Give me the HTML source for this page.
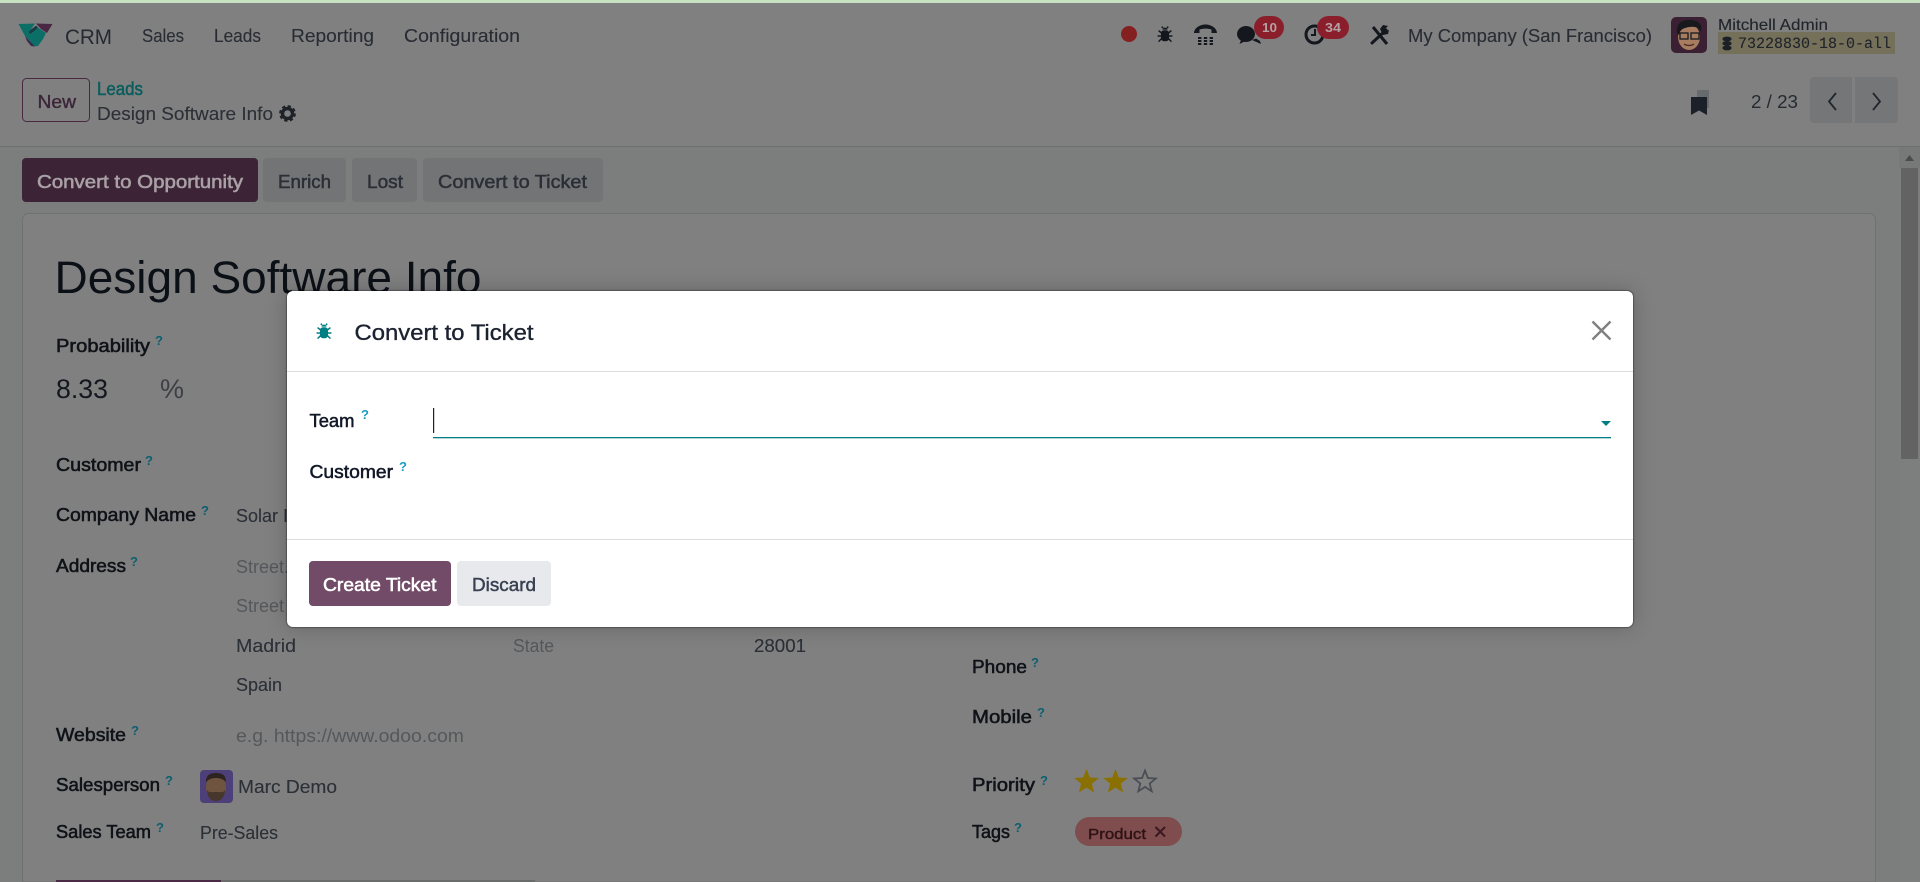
<!DOCTYPE html>
<html lang="en">
<head>
<meta charset="utf-8">
<title>Convert to Ticket</title>
<style>
html,body{margin:0;padding:0;width:1920px;height:882px;overflow:hidden;background:#808080}
#root{position:relative;width:1920px;height:882px;overflow:hidden;background:#808080}
svg{position:absolute;left:0;top:0;display:block}
text{font-family:"Liberation Sans",sans-serif;white-space:pre}
.nav{font-size:18px;fill:#282c33;stroke:#282c33;stroke-width:.12px}
.lb{font-size:18px;fill:#0f1318;stroke:#0f1318;stroke-width:.55px}
.v{font-size:18px;fill:#2b2f36;stroke:#2b2f36;stroke-width:.12px}
.ph{font-size:18px;fill:#55585b}
.q{font-size:13px;fill:#0b5f70;font-weight:700}
.b{font-size:18px;fill:#2b2f36;stroke:#2b2f36;stroke-width:.5px}
#modal{position:absolute;left:287px;top:291px;width:1346px;height:336px;background:#fff;border-radius:6px;box-shadow:0 0 1px 1px rgba(0,0,0,.3),0 0 22px rgba(0,0,0,.22)}
</style>
</head>
<body>
<div id="root">
<svg width="1920" height="882" viewBox="0 0 1920 882" xmlns="http://www.w3.org/2000/svg">
  <defs>
    <g id="bug">
      <path d="M5.400 3.600a2.700 2.700 0 0 1 5.200 0z"/>
      <rect x="4" y="4.300" width="8" height="11" rx="3"/>
      <path d="M4.500 7 1.600 4.600M11.500 7l2.900-2.400M4.500 10H.6M11.500 10h3.900M4.500 12.600 1.600 15.600M11.500 12.600l2.900 3M6 2 4.800.6M10 2l1.200-1.400" fill="none" stroke-width="1.500" stroke="currentColor"/>
    </g>
    <polygon id="star" points="0,-13 3.29,-4.53 12.36,-4.02 5.33,1.73 7.64,10.52 0,5.6 -7.64,10.52 -5.33,1.73 -12.36,-4.02 -3.29,-4.53"/>
  </defs>

  <!-- background -->
  <rect width="1920" height="882" fill="#808080"/>
  <rect width="1920" height="3" fill="#c6e2c1"/>
  <rect y="147" width="1920" height="735" fill="#7c7e7e"/>
  <rect y="146" width="1920" height="1" fill="#6e7070"/>

  <!-- logo -->
  <polygon points="18.500,24 35,23.500 31,29 37,27 46,33 43,39 38,46 33,46.500 30,41 25,36" fill="#0b6f68"/>
  <polygon points="36,23.500 52.500,24 47,33 41,29" fill="#4a2745"/>
  <polygon points="25,36 35,46.500 31,46 27,41" fill="#3c2a4a"/>
  <path d="M30.500 32 36 27.500" stroke="#1c3a44" stroke-width="3" stroke-linecap="round" fill="none"/>

  <!-- nav -->
  <text x="65" y="44" font-size="21" fill="#252a32" textLength="47" lengthAdjust="spacingAndGlyphs">CRM</text>
  <text class="nav" x="142" y="42" textLength="42" lengthAdjust="spacingAndGlyphs">Sales</text>
  <text class="nav" x="214" y="42" textLength="47" lengthAdjust="spacingAndGlyphs">Leads</text>
  <text class="nav" x="291" y="42" textLength="83" lengthAdjust="spacingAndGlyphs">Reporting</text>
  <text class="nav" x="404" y="42" textLength="116" lengthAdjust="spacingAndGlyphs">Configuration</text>

  <!-- systray -->
  <circle cx="1129" cy="34" r="8" fill="#842020"/>
  <g transform="translate(1157,26)" fill="#14181e" color="#14181e"><use href="#bug"/></g>
  <path d="M1194 33c0-5 6-8.500 11.500-8.500S1217 28 1217 33l-5.500 0v-3.500c-4-1.200-8-1.200-12 0V33z" fill="#14181e"/>
  <g fill="#14181e">
    <rect x="1198" y="37" width="3.400" height="2"/><rect x="1203.800" y="37" width="3.400" height="2"/><rect x="1209.600" y="37" width="3.400" height="2"/>
    <rect x="1198" y="40" width="3.400" height="2"/><rect x="1203.800" y="40" width="3.400" height="2"/><rect x="1209.600" y="40" width="3.400" height="2"/>
    <rect x="1198" y="43" width="3.400" height="2"/><rect x="1203.800" y="43" width="3.400" height="2"/><rect x="1209.600" y="43" width="3.400" height="2"/>
  </g>
  <ellipse cx="1246" cy="34" rx="9" ry="8" fill="#14181e"/>
  <path d="M1241 40l-1.500 4 6-3zM1252 40l9 4-1-3-4-2.500z" fill="#14181e"/>
  <rect x="1254" y="16" width="30" height="23" rx="11.500" fill="#8a1f2b"/>
  <text x="1262" y="32" font-size="13" font-weight="700" fill="#b3a0a2" textLength="15" lengthAdjust="spacingAndGlyphs">10</text>
  <circle cx="1314.500" cy="34.500" r="8.500" fill="none" stroke="#14181e" stroke-width="3"/>
  <path d="M1315 29v6h-4" fill="none" stroke="#14181e" stroke-width="2"/>
  <rect x="1317" y="16" width="32" height="23" rx="11.500" fill="#8a1f2b"/>
  <text x="1325" y="32" font-size="13" font-weight="700" fill="#b3a0a2" textLength="16" lengthAdjust="spacingAndGlyphs">34</text>
  <path d="M1373 27l14 17" stroke="#14181e" stroke-width="3" fill="none"/>
  <path d="M1386 30l-14 13" stroke="#14181e" stroke-width="3" fill="none" stroke-linecap="round"/>
  <path d="M1380 29l3-4 5 1-3 3 1 2 3-1-1 4-5 1z" fill="#14181e"/>
  <text class="nav" x="1408" y="42" textLength="244" lengthAdjust="spacingAndGlyphs">My Company (San Francisco)</text>

  <!-- user avatar -->
  <rect x="1671" y="17" width="36" height="36" rx="5" fill="#3b1f33"/>
  <ellipse cx="1689" cy="37" rx="11" ry="13" fill="#a77c60"/>
  <path d="M1677 33c-1-9 4-13 12-13s14 3 12 12c-2-4-5-6-12-5-5 1-9 2-10 8z" fill="#17191d"/>
  <rect x="1680" y="33" width="8" height="6" fill="none" stroke="#17191d" stroke-width="1.300"/>
  <rect x="1691" y="33" width="8" height="6" fill="none" stroke="#17191d" stroke-width="1.300"/>
  <path d="M1684 44c3 2 7 2 10 0" stroke="#4a2a20" stroke-width="1.300" fill="none"/>
  <text x="1718" y="30" font-size="16" fill="#20242b" stroke="#20242b" stroke-width=".12" textLength="110" lengthAdjust="spacingAndGlyphs">Mitchell Admin</text>
  <rect x="1718" y="32" width="177" height="22" fill="#75705a"/>
  <g fill="#1b1f26">
    <ellipse cx="1727" cy="39" rx="4.600" ry="2.400"/>
    <ellipse cx="1727" cy="43.500" rx="4.600" ry="2.400"/>
    <ellipse cx="1727" cy="48" rx="4.600" ry="2.400"/>
  </g>
  <text x="1738" y="48" font-size="15.500" style="font-family:'Liberation Mono',monospace" fill="#1f232a" stroke="#1f232a" stroke-width=".1" textLength="153" lengthAdjust="spacingAndGlyphs">73228830-18-0-all</text>

  <!-- control panel -->
  <rect x="22.500" y="78.500" width="67" height="43" rx="4" fill="none" stroke="#47293f" stroke-width="1"/>
  <text x="37.500" y="108" font-size="18" fill="#3b2438" stroke="#3b2438" stroke-width=".35" textLength="38.500" lengthAdjust="spacingAndGlyphs">New</text>
  <text x="97" y="95" font-size="18" fill="#0b5d5d" stroke="#0b5d5d" stroke-width=".5" textLength="46" lengthAdjust="spacingAndGlyphs">Leads</text>
  <text class="v" x="97" y="120" textLength="176" lengthAdjust="spacingAndGlyphs">Design Software Info</text>
  <circle cx="287.500" cy="113.500" r="5" fill="none" stroke="#1e2229" stroke-width="3.400"/>
  <circle cx="287.500" cy="113.500" r="7.200" fill="none" stroke="#1e2229" stroke-width="2.400" stroke-dasharray="3.200 2.450"/>

  <path d="M1697 90h12v18h-12z" fill="#686b6e"/>
  <path d="M1691 97h16v18l-8-4.500-8 4.500z" fill="#1c2129"/>
  <text x="1751" y="108" font-size="18" fill="#262a31" textLength="47" lengthAdjust="spacingAndGlyphs">2 / 23</text>
  <path d="M1810 81a4 4 0 0 1 4-4h38v46h-38a4 4 0 0 1-4-4z" fill="#747677"/>
  <path d="M1855 77h39a4 4 0 0 1 4 4v38a4 4 0 0 1-4 4h-39z" fill="#747677"/>
  <path d="M1836 93l-7 8.500 7 8.500M1873 93l7 8.500-7 8.500" fill="none" stroke="#1f2630" stroke-width="1.800"/>

  <!-- action buttons -->
  <rect x="22" y="158" width="236" height="44" rx="4" fill="#3c2436"/>
  <text x="37" y="188" font-size="18" fill="#a9a1a6" stroke="#a9a1a6" stroke-width=".55" textLength="206" lengthAdjust="spacingAndGlyphs">Convert to Opportunity</text>
  <rect x="263" y="158" width="83" height="44" rx="4" fill="#727476"/>
  <text class="b" x="278" y="188" textLength="53" lengthAdjust="spacingAndGlyphs">Enrich</text>
  <rect x="352" y="158" width="65" height="44" rx="4" fill="#727476"/>
  <text class="b" x="367" y="188" textLength="36" lengthAdjust="spacingAndGlyphs">Lost</text>
  <rect x="423" y="158" width="180" height="44" rx="4" fill="#727476"/>
  <text class="b" x="438" y="188" textLength="149" lengthAdjust="spacingAndGlyphs">Convert to Ticket</text>

  <!-- card -->
  <path d="M22.500 882V219.500a6 6 0 0 1 6-6H1869.500a6 6 0 0 1 6 6V882z" fill="#808080" stroke="#6f7170"/>

  <text x="54.500" y="293" font-size="45" fill="#0b0f16" textLength="427" lengthAdjust="spacingAndGlyphs">Design Software Info</text>

  <!-- left column -->
  <text class="lb" x="56" y="352" textLength="94" lengthAdjust="spacingAndGlyphs">Probability</text>
  <text class="q" x="155" y="345">?</text>
  <text x="56" y="398" font-size="27" fill="#14181e" textLength="52" lengthAdjust="spacingAndGlyphs">8.33</text>
  <text x="160" y="398" font-size="27" fill="#3c3f44" textLength="24" lengthAdjust="spacingAndGlyphs">%</text>

  <text class="lb" x="56" y="471" textLength="85" lengthAdjust="spacingAndGlyphs">Customer</text>
  <text class="q" x="145" y="465">?</text>
  <text class="lb" x="56" y="521" textLength="140" lengthAdjust="spacingAndGlyphs">Company Name</text>
  <text class="q" x="201" y="515">?</text>
  <text class="v" x="236" y="522">Solar Industries</text>
  <text class="lb" x="56" y="572" textLength="70" lengthAdjust="spacingAndGlyphs">Address</text>
  <text class="q" x="130" y="566">?</text>
  <text class="ph" x="236" y="573">Street...</text>
  <text class="ph" x="236" y="612">Street 2...</text>
  <text class="v" x="236" y="652" textLength="60" lengthAdjust="spacingAndGlyphs">Madrid</text>
  <text class="ph" x="513" y="652" textLength="41" lengthAdjust="spacingAndGlyphs">State</text>
  <text class="v" x="754" y="652" textLength="52" lengthAdjust="spacingAndGlyphs">28001</text>
  <text class="v" x="236" y="691" textLength="46" lengthAdjust="spacingAndGlyphs">Spain</text>
  <text class="lb" x="56" y="741" textLength="70" lengthAdjust="spacingAndGlyphs">Website</text>
  <text class="q" x="131" y="735">?</text>
  <text class="ph" x="236" y="742" textLength="228" lengthAdjust="spacingAndGlyphs">e.g. https://www.odoo.com</text>
  <text class="lb" x="56" y="791" textLength="104" lengthAdjust="spacingAndGlyphs">Salesperson</text>
  <text class="q" x="165" y="785">?</text>
  <rect x="200" y="770" width="33" height="33" rx="4" fill="#4d3f78"/>
  <ellipse cx="216" cy="787" rx="10" ry="13" fill="#6f5440"/>
  <path d="M206 782c0-7 4-9 10-9s10 2 10 9c-3-3-6-4-10-4s-7 1-10 4z" fill="#2d2320"/>
  <path d="M207 790c2 3 3 2 9 2s7 1 9-2c0 7-4 11-9 11s-9-4-9-11z" fill="#46362c"/>
  <text class="v" x="238" y="793" textLength="99" lengthAdjust="spacingAndGlyphs">Marc Demo</text>
  <text class="lb" x="56" y="838" textLength="95" lengthAdjust="spacingAndGlyphs">Sales Team</text>
  <text class="q" x="156" y="832">?</text>
  <text class="v" x="200" y="839" textLength="78" lengthAdjust="spacingAndGlyphs">Pre-Sales</text>

  <!-- right column -->
  <text class="lb" x="972" y="673" textLength="55" lengthAdjust="spacingAndGlyphs">Phone</text>
  <text class="q" x="1031" y="667">?</text>
  <text class="lb" x="972" y="723" textLength="60" lengthAdjust="spacingAndGlyphs">Mobile</text>
  <text class="q" x="1037" y="717">?</text>
  <text class="lb" x="972" y="791" textLength="63" lengthAdjust="spacingAndGlyphs">Priority</text>
  <text class="q" x="1040" y="785">?</text>
  <text class="lb" x="972" y="838" textLength="38" lengthAdjust="spacingAndGlyphs">Tags</text>
  <text class="q" x="1014" y="832">?</text>
  <use href="#star" x="1086.500" y="782" fill="#8a7000"/>
  <use href="#star" x="1115.500" y="782" fill="#8a7000"/>
  <use href="#star" x="1145" y="782" fill="none" stroke="#4a4d55" stroke-width="2" transform="translate(1145,782) scale(.88) translate(-1145,-782)"/>
  <rect x="1075" y="817" width="107" height="29" rx="14.500" fill="#7f4d4d"/>
  <text x="1088" y="839" font-size="15" fill="#2e1215" stroke="#2e1215" stroke-width=".4" textLength="58" lengthAdjust="spacingAndGlyphs">Product</text>
  <path d="M1155.500 827l9.500 9.500M1165 827l-9.500 9.500" stroke="#3a1a1e" stroke-width="2" fill="none"/>

  <!-- bottom tabs -->
  <rect x="56" y="880" width="479" height="2" fill="#6a6c6c"/>
  <rect x="56" y="880" width="165" height="2" fill="#4a2a44"/>

  <!-- scrollbar -->
  <rect x="1899" y="147" width="21" height="735" fill="#7d7f7e"/>
  <rect x="1899" y="147" width="21" height="21" fill="#777978"/>
  <polygon points="1909.500,155 1914,161 1905,161" fill="#4a4a4a"/>
  <rect x="1901" y="168" width="17" height="291" fill="#636363"/>
</svg>

<div id="modal"></div>

<svg width="1920" height="882" viewBox="0 0 1920 882" xmlns="http://www.w3.org/2000/svg">
  <rect x="287" y="371" width="1346" height="1" fill="#dcdcdc"/>
  <rect x="287" y="539" width="1346" height="1" fill="#dcdcdc"/>
  <g transform="translate(316,323)" fill="#017e84" color="#017e84"><use href="#bug"/></g>
  <text x="354.500" y="340" font-size="22" fill="#1b2230" stroke="#1b2230" stroke-width=".35" textLength="179" lengthAdjust="spacingAndGlyphs">Convert to Ticket</text>
  <path d="M1592.500 321.500l18 18M1610.500 321.500l-18 18" stroke="#808080" stroke-width="2.400" fill="none"/>

  <text x="309.500" y="427" font-size="18" fill="#111827" stroke="#111827" stroke-width=".5" textLength="45" lengthAdjust="spacingAndGlyphs">Team</text>
  <text x="361" y="419" font-size="13" font-weight="700" fill="#1a9dc0">?</text>
  <rect x="433" y="408" width="1.200" height="25" fill="#1b2230"/>
  <rect x="433" y="437" width="1178" height="1.300" fill="#017e84"/>
  <polygon points="1601,421 1611,421 1606,426" fill="#017e84"/>
  <text x="309.500" y="478" font-size="18" fill="#111827" stroke="#111827" stroke-width=".5" textLength="83.500" lengthAdjust="spacingAndGlyphs">Customer</text>
  <text x="399" y="471" font-size="13" font-weight="700" fill="#1a9dc0">?</text>

  <rect x="309" y="561" width="142" height="45" rx="4" fill="#714b67"/>
  <text x="323" y="591" font-size="18" fill="#fff" stroke="#fff" stroke-width=".55" textLength="113.500" lengthAdjust="spacingAndGlyphs">Create Ticket</text>
  <rect x="457" y="561" width="94" height="45" rx="4" fill="#e7e9ed"/>
  <text x="472" y="591" font-size="18" fill="#374151" stroke="#374151" stroke-width=".45" textLength="64" lengthAdjust="spacingAndGlyphs">Discard</text>
</svg>
</div>
</body>
</html>
